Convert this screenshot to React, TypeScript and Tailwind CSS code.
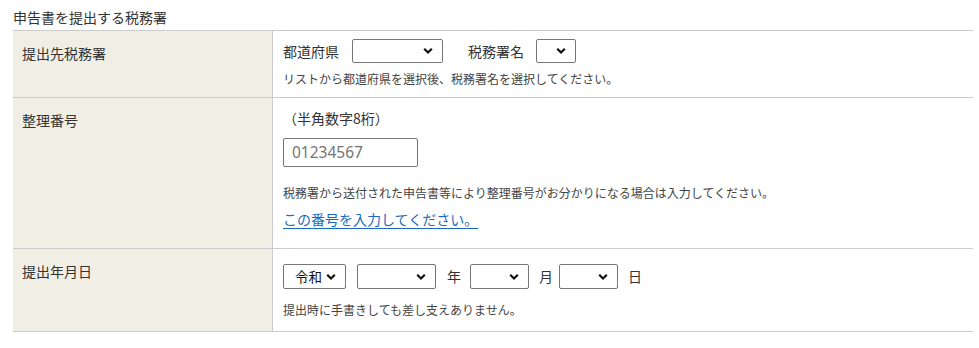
const Chevron = () => (
  <svg width="10" height="7" viewBox="0 0 10 7" className="pointer-events-none absolute right-[9px] top-1/2 -translate-y-1/2">
    <path d="M1.2 1.2 L5 5 L8.8 1.2" fill="none" stroke="#111" strokeWidth="2.2" />
  </svg>
);

const Select: React.FC<{ w: string; h: string; label?: string }> = ({ w, h, label }) => (
  <div className={`relative ${w} ${h} rounded-[2px] border border-[#767676] bg-white`}>
    {label && (
      <span className="absolute left-[11px] top-1/2 -translate-y-1/2 text-[13.5px] leading-none text-[#111]">
        {label}
      </span>
    )}
    <Chevron />
  </div>
);

const App: React.FC = () => {
  return (
    <div className="min-h-[348px] w-[979px] bg-white pl-[13px] pt-[8px] font-['Noto_Sans_CJK_JP','Noto_Sans',sans-serif] text-[#333]">
      <h2 className="h-[22px] text-[14px] leading-[18px]">申告書を提出する税務署</h2>

      <div className="w-[960px] border-t border-[#cccccc]">
        {/* 提出先税務署 */}
        <div className="grid h-[67px] grid-cols-[260px_1fr] border-b border-[#cccccc]">
          <div className="border-r border-[#cccccc] bg-[#f1efe5] pl-[9px] pt-[13px] text-[14px] leading-[18px]">
            提出先税務署
          </div>
          <div className="pl-[10px] pt-[8px]">
            <div className="flex items-center text-[14px]">
              <span>都道府県</span>
              <div className="ml-[13px]">
                <Select w="w-[91px]" h="h-[24px]" />
              </div>
              <span className="ml-[25px]">税務署名</span>
              <div className="ml-[12px]">
                <Select w="w-[40px]" h="h-[24px]" />
              </div>
            </div>
            <p className="mt-[8px] text-[12px] leading-[16px] text-[#444]">
              リストから都道府県を選択後、税務署名を選択してください。
            </p>
          </div>
        </div>

        {/* 整理番号 */}
        <div className="grid h-[151px] grid-cols-[260px_1fr] border-b border-[#cccccc]">
          <div className="border-r border-[#cccccc] bg-[#f1efe5] pl-[9px] pt-[13px] text-[14px] leading-[18px]">
            整理番号
          </div>
          <div className="pl-[10px] pt-[11px]">
            <p className="text-[14px] leading-[18px]">（半角数字8桁）</p>
            <div className="mt-[11px] flex h-[29px] w-[135px] items-center rounded-[2px] border border-[#767676] pl-[8px] font-['Noto_Sans',sans-serif] text-[15.5px] text-[#757575]">
              01234567
            </div>
            <p className="mt-[18px] text-[12px] leading-[16px] text-[#444]">
              税務署から送付された申告書等により整理番号がお分かりになる場合は入力してください。
            </p>
            <a href="#" className="mt-[9px] inline-block text-[14px] leading-[18px] text-[#1a6ac0] underline underline-offset-[3px]">
              この番号を入力してください。
            </a>
          </div>
        </div>

        {/* 提出年月日 */}
        <div className="grid h-[83px] grid-cols-[260px_1fr] border-b border-[#cccccc]">
          <div className="border-r border-[#cccccc] bg-[#f1efe5] pl-[9px] pt-[13px] text-[14px] leading-[18px]">
            提出年月日
          </div>
          <div className="pl-[10px] pt-[15px]">
            <div className="flex items-center text-[14px]">
              <Select w="w-[63px]" h="h-[25px]" label="令和" />
              <div className="ml-[11px]">
                <Select w="w-[79px]" h="h-[25px]" />
              </div>
              <span className="ml-[11px]">年</span>
              <div className="ml-[9px]">
                <Select w="w-[59px]" h="h-[25px]" />
              </div>
              <span className="ml-[10px]">月</span>
              <div className="ml-[6px]">
                <Select w="w-[59px]" h="h-[25px]" />
              </div>
              <span className="ml-[10px]">日</span>
            </div>
            <p className="mt-[13px] text-[12px] leading-[16px] text-[#444]">
              提出時に手書きしても差し支えありません。
            </p>
          </div>
        </div>
      </div>
    </div>
  );
};

export default App;
